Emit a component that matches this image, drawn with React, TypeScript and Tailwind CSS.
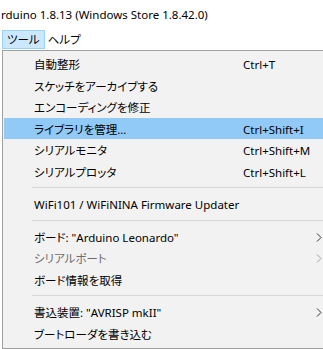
import React from "react";

const font = { fontFamily: '"Noto Sans", "Noto Sans CJK JP", sans-serif' };

type Item =
  | { type: "item"; label: string; shortcut?: string; arrow?: boolean; disabled?: boolean; active?: boolean }
  | { type: "sep" };

const items: Item[] = [
  { type: "item", label: "自動整形", shortcut: "Ctrl+T" },
  { type: "item", label: "スケッチをアーカイブする" },
  { type: "item", label: "エンコーディングを修正" },
  { type: "item", label: "ライブラリを管理...", shortcut: "Ctrl+Shift+I", active: true },
  { type: "item", label: "シリアルモニタ", shortcut: "Ctrl+Shift+M" },
  { type: "item", label: "シリアルプロッタ", shortcut: "Ctrl+Shift+L" },
  { type: "sep" },
  { type: "item", label: "WiFi101 / WiFiNINA Firmware Updater" },
  { type: "sep" },
  { type: "item", label: 'ボード: "Arduino Leonardo"', arrow: true },
  { type: "item", label: "シリアルポート", arrow: true, disabled: true },
  { type: "item", label: "ボード情報を取得" },
  { type: "sep" },
  { type: "item", label: '書込装置: "AVRISP mkII"', arrow: true },
  { type: "item", label: "ブートローダを書き込む" },
];

function Arrow({ disabled }: { disabled?: boolean }) {
  return (
    <svg width="6" height="9" viewBox="0 0 6 9">
      <path d="M1 0.5 L5 4.5 L1 8.5" fill="none" stroke={disabled ? "#a0a0a0" : "#333"} strokeWidth="1" />
    </svg>
  );
}

export default function App() {
  return (
    <div
      className="w-[323px] h-[349px] overflow-hidden bg-white text-[11.5px] text-black [font-feature-settings:'palt']"
      style={font}
    >
      <div className="h-[29px] flex items-center pl-[1px] whitespace-nowrap">
        rduino 1.8.13 (Windows Store 1.8.42.0)
      </div>
      <div className="h-[21px] flex items-start pt-[1px]">
        <div className="ml-[2px] h-[19px] px-[4px] flex items-center bg-[#cce8ff] border border-[#99d1ff]">ツール</div>
        <div className="h-[19px] px-[3px] flex items-center">ヘルプ</div>
      </div>
      <div className="ml-[2px] w-[340px] h-[299px] bg-[#f2f2f2] border border-[#a0a0a0] pt-[2px] pl-[1px]">
        {items.map((it, i) =>
          it.type === "sep" ? (
            <div key={i} className="h-[11px] flex items-center pl-[28px]">
              <div className="h-px w-full bg-[#d7d7d7]" />
            </div>
          ) : (
            <div
              key={i}
              className={
                "relative h-[21.5px] flex items-center pt-[2px] whitespace-nowrap " +
                (it.active ? "bg-[#91c9f7]" : "") +
                (it.disabled ? " text-[#6d6d6d]" : "")
              }
            >
              <span className="pl-[30px]">{it.label}</span>
              {it.shortcut && <span className="absolute left-[239px]">{it.shortcut}</span>}
              {it.arrow && (
                <span className="absolute left-[312px] top-0 h-full pt-[2px] flex items-center">
                  <Arrow disabled={it.disabled} />
                </span>
              )}
            </div>
          )
        )}
      </div>
    </div>
  );
}
